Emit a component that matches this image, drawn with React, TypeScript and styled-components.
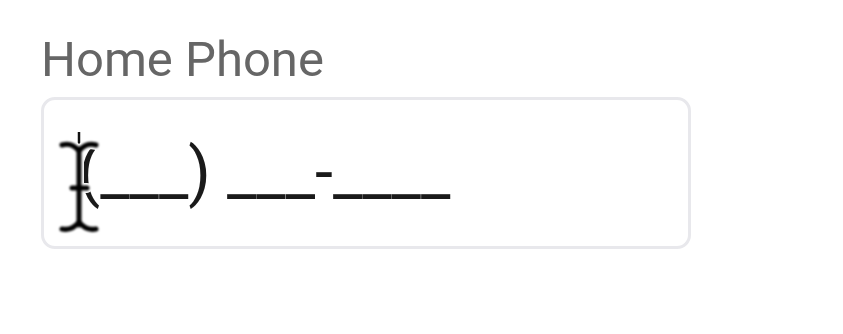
import React from "react";
import styled, { createGlobalStyle } from "styled-components";

const GlobalStyle = createGlobalStyle`
  html, body {
    margin: 0;
    padding: 0;
    background: #ffffff;
  }
  body {
    font-family: Roboto, "Noto Sans", Arial, sans-serif;
  }
`;

const Page = styled.div`
  display: flex;
  flex-direction: column;
  padding: 31px 0 0 41px;
  width: 650px;
`;

const Label = styled.label`
  display: block;
  color: #666666;
  font-size: 49px;
  line-height: 57px;
  margin-left: 0;
  margin-bottom: 9px;
`;

const Field = styled.div`
  position: relative;
  box-sizing: border-box;
  width: 650px;
  height: 152px;
  border: 3px solid #e8e8ec;
  border-radius: 14px;
  display: flex;
  align-items: center;
  padding-left: 34px;
`;

const MaskText = styled.span`
  font-size: 65px;
  line-height: 1;
  color: #1a1a1a;
  white-space: pre;
  margin-top: -2px;
`;

const Cursor = styled.svg`
  position: absolute;
  left: 11px;
  top: 25px;
  width: 55px;
  height: 110px;
  overflow: visible;
`;

const IBeam = () => (
  <Cursor viewBox="0 0 55 110">
    <defs>
      <filter id="soft" x="-20%" y="-20%" width="140%" height="140%">
        <feGaussianBlur stdDeviation="0.9" />
      </filter>
    </defs>
    <line x1="24" y1="7" x2="24" y2="22" stroke="#111" strokeWidth="2.5" />
    <g fill="none" strokeLinecap="round" strokeLinejoin="round">
      <g stroke="#ffffff" strokeWidth="10">
        <path d="M 7 20 Q 17 17 24 26 Q 31 17 41 20" />
        <path d="M 24 24 L 24 100" />
        <path d="M 17 63 L 32 63" />
        <path d="M 7 104 Q 17 106 24 97 Q 31 106 41 104" />
      </g>
      <g stroke="#000000" strokeWidth="5" filter="url(#soft)">
        <path d="M 7 20 Q 17 17 24 26 Q 31 17 41 20" />
        <path d="M 24 24 L 24 100" />
        <path d="M 17 63 L 32 63" />
        <path d="M 7 104 Q 17 106 24 97 Q 31 106 41 104" />
      </g>
    </g>
  </Cursor>
);

export default function App() {
  return (
    <>
      <GlobalStyle />
      <Page>
        <Label>Home Phone</Label>
        <Field>
          <MaskText>(___) ___-____</MaskText>
          <IBeam />
        </Field>
      </Page>
    </>
  );
}
